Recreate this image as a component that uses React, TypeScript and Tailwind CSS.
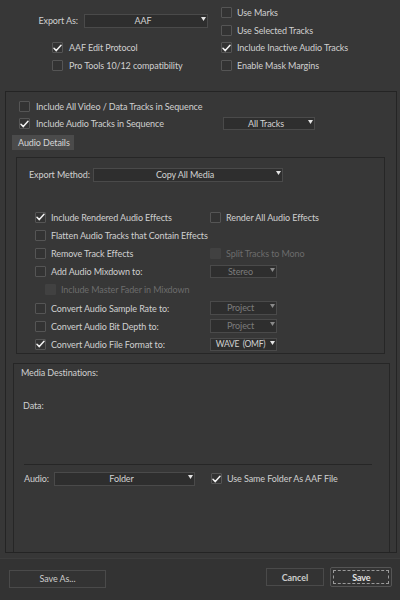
import React from "react";

type CheckProps = { checked?: boolean; disabled?: boolean };

function Check({ checked, disabled }: CheckProps) {
  return (
    <div
      className={
        disabled
          ? "w-[11px] h-[11px] shrink-0 bg-[#414141] rounded-[1px]"
          : "w-[11px] h-[11px] shrink-0 bg-[#333333] border border-[#555555] rounded-[1px] flex items-center justify-center"
      }
    >
      {checked && (
        <svg width="9" height="8" viewBox="0 0 9 8">
          <path d="M1 4.3 L3.3 6.6 L8 1.2" stroke="#f2f2f2" strokeWidth="1.5" fill="none" strokeLinecap="round" strokeLinejoin="round" />
        </svg>
      )}
    </div>
  );
}

type DropProps = { label: string; className: string; disabled?: boolean; labelClass?: string };

function Dropdown({ label, className, disabled, labelClass }: DropProps) {
  return (
    <div className={"flex h-[13.5px] bg-[#2e2e2e] border border-[#4a4a4a] shrink-0 " + className}>
      <span className={"flex-1 text-center leading-[11.5px] whitespace-pre " + (disabled ? "text-[#7c7c7c] " : "text-[#d2d2d2] ") + (labelClass || "")}>{label}</span>
      <svg className="self-start mt-[2px] mr-[1px] shrink-0" width="5" height="4" viewBox="0 0 5 4">
        <path d="M0 0 H5 L2.5 4 Z" fill={disabled ? "#8a8a8a" : "#e4e4e4"} />
      </svg>
    </div>
  );
}

type RowProps = { checked?: boolean; disabled?: boolean; label: string; className?: string };

function CheckLabel({ checked, disabled, label, className }: RowProps) {
  return (
    <div className={"flex items-center gap-[5px] " + (className || "")}>
      <Check checked={checked} disabled={disabled} />
      <span className={"whitespace-nowrap " + (disabled ? "text-[#6c6c6c]" : "text-[#d0d0d0]")}>{label}</span>
    </div>
  );
}

export default function App() {
  return (
    <div className="w-[400px] h-[600px] bg-[#373737] flex flex-col text-[9px] tracking-[-0.1px] leading-none text-[#d0d0d0] font-['Lato',sans-serif] overflow-hidden">
      {/* Top section */}
      <div className="h-[91px] flex shrink-0">
        <div className="w-[221px] pt-[14px]">
          <div className="flex items-center h-[13.5px]">
            <span className="w-[78px] text-right whitespace-nowrap">Export As:</span>
            <Dropdown className="ml-[6px] w-[124px]" label="AAF" />
          </div>
          <div className="pl-[52px] mt-[11.5px]">
            <CheckLabel className="h-[17.5px] gap-[6px]" checked label="AAF Edit Protocol" />
            <CheckLabel className="h-[17.5px] gap-[6px]" label="Pro Tools 10/12 compatibility" />
          </div>
        </div>
        <div className="pt-[3.75px]">
          <CheckLabel className="h-[17.5px]" label="Use Marks" />
          <CheckLabel className="h-[17.5px]" label="Use Selected Tracks" />
          <CheckLabel className="h-[17.5px]" checked label="Include Inactive Audio Tracks" />
          <CheckLabel className="h-[17.5px]" label="Enable Mask Margins" />
        </div>
      </div>

      {/* Outer panel */}
      <div className="ml-[5px] w-[392px] h-[462px] border border-[#242424] flex flex-col shrink-0 pt-[6px]">
        <CheckLabel className="h-[17px] pl-[13px] gap-[6px]" label="Include All Video / Data Tracks in Sequence" />
        <div className="flex items-center h-[17px]">
          <div className="w-[217px]">
            <CheckLabel className="pl-[13px] gap-[6px]" checked label="Include Audio Tracks in Sequence" />
          </div>
          <Dropdown className="w-[92px]" label="All Tracks" />
        </div>
        <div className="mt-[3px] ml-[6px] w-[62px] h-[15px] bg-[#4b4b4b] flex items-center pl-[6px] text-[#d6d6d6] whitespace-nowrap shrink-0">
          Audio Details
        </div>

        {/* Audio details panel */}
        <div className="mt-[7px] ml-[10px] w-[369px] h-[197px] border border-[#262626] flex flex-col shrink-0">
          <div className="mt-[10px] flex items-center h-[13.5px] pl-[12px]">
            <span className="w-[64px] whitespace-nowrap">Export Method:</span>
            <Dropdown className="w-[190px]" label="Copy All Media" />
          </div>
          <div className="mt-[26.5px] flex flex-col">
            <div className="flex items-center h-[18.2px]">
              <div className="w-[193px] pl-[18px]"><CheckLabel checked label="Include Rendered Audio Effects" /></div>
              <CheckLabel label="Render All Audio Effects" />
            </div>
            <div className="flex items-center h-[18.2px]">
              <div className="w-[193px] pl-[18px]"><CheckLabel label="Flatten Audio Tracks that Contain Effects" /></div>
            </div>
            <div className="flex items-center h-[18.2px]">
              <div className="w-[193px] pl-[18px]"><CheckLabel label="Remove Track Effects" /></div>
              <CheckLabel disabled label="Split Tracks to Mono" />
            </div>
            <div className="flex items-center h-[18.2px]">
              <div className="w-[193px] pl-[18px]"><CheckLabel label="Add Audio Mixdown to:" /></div>
              <Dropdown className="w-[67px]" disabled label="Stereo" />
            </div>
            <div className="flex items-center h-[18.2px]">
              <div className="w-[193px] pl-[28px]"><CheckLabel disabled label="Include Master Fader in Mixdown" /></div>
            </div>
            <div className="flex items-center h-[18.2px]">
              <div className="w-[193px] pl-[18px]"><CheckLabel label="Convert Audio Sample Rate to:" /></div>
              <Dropdown className="w-[67px]" disabled label="Project" />
            </div>
            <div className="flex items-center h-[18.2px]">
              <div className="w-[193px] pl-[18px]"><CheckLabel label="Convert Audio Bit Depth to:" /></div>
              <Dropdown className="w-[67px]" disabled label="Project" />
            </div>
            <div className="flex items-center h-[18.2px]">
              <div className="w-[193px] pl-[18px]"><CheckLabel checked label="Convert Audio File Format to:" /></div>
              <Dropdown className="w-[67px]" labelClass="tracking-[-0.3px] text-[8.5px]" label="WAVE  (OMF)" />
            </div>
          </div>
        </div>

        {/* Media destinations panel */}
        <div className="mt-[9px] ml-[7px] w-[377px] flex-1 border border-b-0 border-[#262626] flex flex-col">
          <div className="mt-[2px] h-[12px] pl-[7px] flex items-center">Media Destinations:</div>
          <div className="mt-[21px] h-[12px] pl-[9px] flex items-center">Data:</div>
          <div className="mt-[53px] ml-[10px] w-[348px] h-px bg-[#262626]" />
          <div className="mt-[7px] h-[13.5px] pl-[10px] flex items-center">
            <span className="w-[30px]">Audio:</span>
            <Dropdown className="w-[141px]" label="Folder" />
            <CheckLabel className="ml-[16px]" checked label="Use Same Folder As AAF File" />
          </div>
        </div>
      </div>

      {/* Footer */}
      <div className="mt-[5px] border-t border-[#3d3d3d] bg-[#333333] flex-1 flex items-start">
        <div className="ml-[9px] mt-[11px] w-[97px] h-[17.5px] border border-[#4a4a4a] flex items-center justify-center text-[#cccccc]">
          Save As...
        </div>
        <div className="ml-auto mt-[9.3px] w-[58px] h-[17.5px] border border-[#4a4a4a] flex items-center justify-center font-bold text-[#cccccc]">
          Cancel
        </div>
        <div className="ml-[6.4px] mr-[7.7px] mt-[7.7px] w-[62px] h-[20.7px] border border-[#555555] rounded-[2px] p-[2px]">
          <div className="h-full border border-dashed border-[#9a9a9a] flex items-center justify-center font-bold text-[#e2e2e2]">
            Save
          </div>
        </div>
      </div>
    </div>
  );
}
